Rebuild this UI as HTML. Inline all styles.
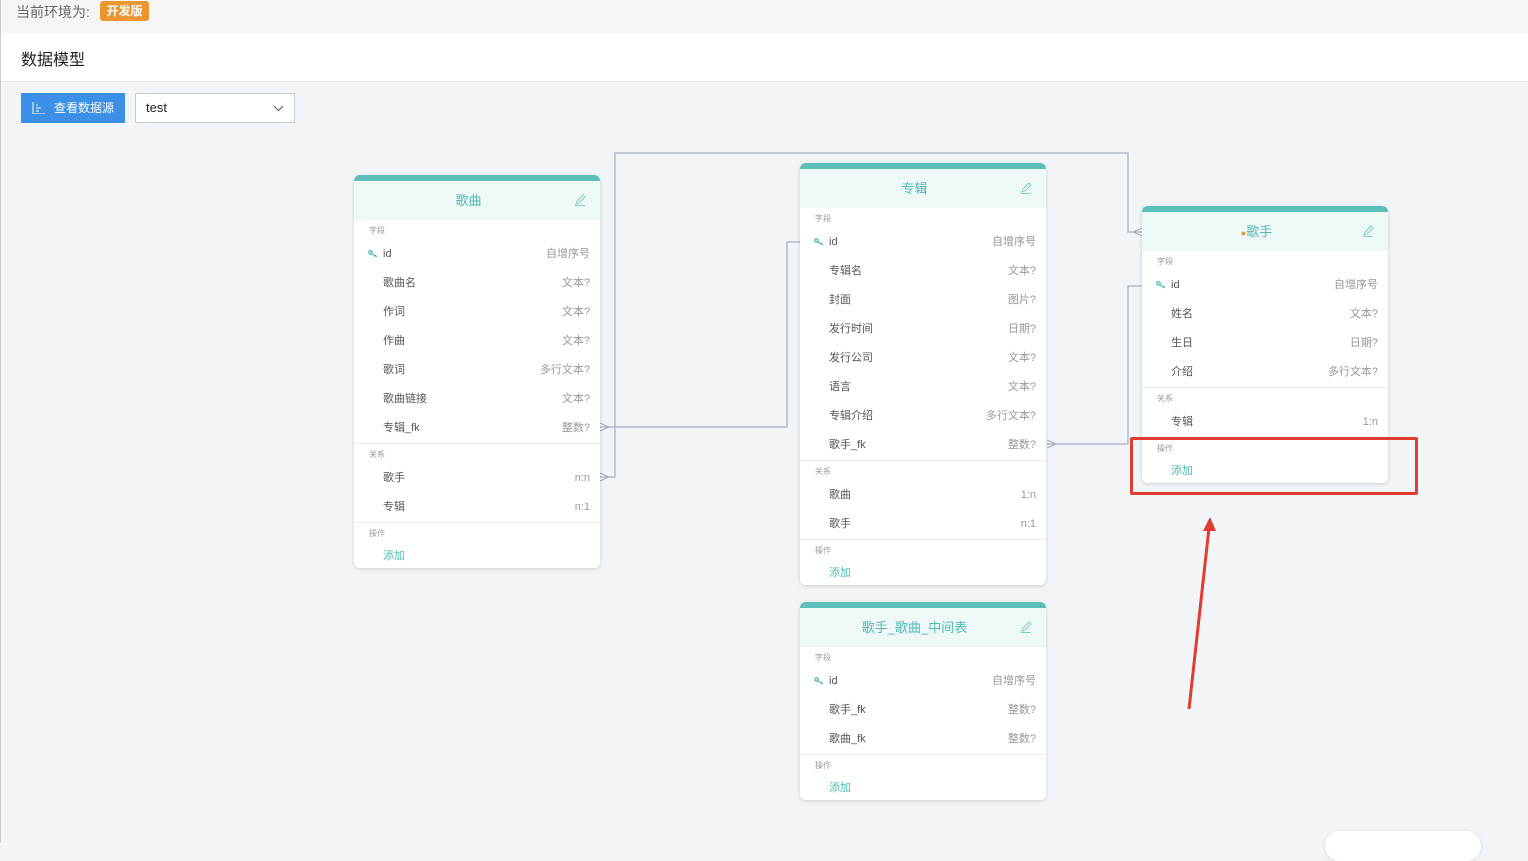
<!DOCTYPE html>
<html><head><meta charset="utf-8"><style>
*{box-sizing:border-box;margin:0;padding:0}
body{width:1528px;height:843px;overflow:hidden;background:#f2f5f8;font-family:"Liberation Sans","Noto Sans CJK SC",sans-serif;position:relative}
.lbd{position:absolute;left:0;top:0;width:1px;height:843px;background:#ccc}
.top{position:absolute;left:0;top:0;width:1528px;height:33px;background:#f5f5f5}
.top span.t{position:absolute;left:16px;top:2px;font-size:14px;color:#666}
.tag{position:absolute;left:100px;top:1px;width:49px;height:20px;background:#ec9632;border-radius:3px;color:#fff;font-size:12px;font-weight:bold;text-align:center;line-height:20px}
.hd{position:absolute;left:0;top:33px;width:1528px;height:49px;background:#fff;border-bottom:1px solid #e6eaee}
.hd span{position:absolute;left:21px;top:13px;font-size:16px;color:#222}
.btn{position:absolute;left:21px;top:93px;width:104px;height:30px;background:#3b8fe6;color:#fff;font-size:12px;line-height:30px;padding-left:33px}
.sel{position:absolute;left:135px;top:93px;width:160px;height:30px;background:#fff;border:1px solid #ccc;font-size:13px;line-height:28px;padding-left:10px;color:#222}
.card{position:absolute;width:246px;background:#fff;border-radius:6px;box-shadow:0 1px 4px rgba(0,0,0,.15);overflow:hidden;border-top:6px solid #5bbfb7}
.ch{height:39px;background:#eef8f7;color:#4fbab2;font-size:13px;text-align:center;line-height:39px;position:relative;padding-right:17px}
.ch svg{position:absolute;right:14px;top:13px}
.lb{height:20px;font-size:8px;color:#999;padding-left:15px;line-height:22px}
.r{height:29px;line-height:29px;font-size:11px;color:#555;padding:0 10px 0 29px;position:relative}
.r b{font-weight:normal;position:absolute;right:10px;color:#999}
.r i{position:absolute;left:14px;top:10px;display:block;width:10px;height:8px}
.r i svg{display:block}
.sec{border-top:1px solid #eee}
.add{color:#4fbab2;height:25px;line-height:27px}
</style></head><body>
<div class="top"><span class="t">当前环境为:</span><div class="tag">开发版</div></div>
<div class="hd"><span>数据模型</span></div>
<div class="lbd"></div>
<div class="btn"><svg style="position:absolute;left:11px;top:9px" width="13" height="12" viewBox="0 0 13 12" fill="none" stroke="#fff" stroke-width="1"><path d="M1 0v12h12M4 3h2M4 6h5M4 9h3"/></svg>查看数据源</div>
<div class="sel">test<svg style="position:absolute;right:10px;top:11px" width="11" height="7" viewBox="0 0 11 7" fill="none" stroke="#666" stroke-width="1.2"><path d="M1 1l4.5 4.5L10 1"/></svg></div>

<svg style="position:absolute;left:0;top:0" width="1528" height="843" fill="none" stroke="#a7afbf" stroke-width="1.2">
<path d="M600 427H787V242H800"/>
<path d="M600 477H615V153H1128V232H1142"/>
<path d="M1047 444H1128V286H1142"/>
<path d="M600 423l9 4-9 4M600 473l9 4-9 4M1047 440l9 4-9 4M1142 228l-9 4 9 4"/>
</svg>

<div class="card" style="left:354px;top:175px">
<div class="ch">歌曲<svg width="12" height="12" viewBox="0 0 12 12" fill="none" stroke="#7fcfc8"><path d="M2 10l1-3 6-6 2 2-6 6zM1 11.5h10"/></svg></div>
<div class="lb">字段</div>
<div class="r"><i><svg width="10" height="8" viewBox="0 0 10 8" fill="none" stroke="#4fbab2" stroke-width="1.3"><circle cx="2.5" cy="2.5" r="1.7"/><path d="M4 4l5 3M7 6l1-1"/></svg></i>id<b>自增序号</b></div>
<div class="r">歌曲名<b>文本?</b></div>
<div class="r">作词<b>文本?</b></div>
<div class="r">作曲<b>文本?</b></div>
<div class="r">歌词<b>多行文本?</b></div>
<div class="r">歌曲链接<b>文本?</b></div>
<div class="r">专辑_fk<b>整数?</b></div>
<div class="sec"><div class="lb">关系</div><div class="r">歌手<b>n:n</b></div><div class="r">专辑<b>n:1</b></div></div>
<div class="sec"><div class="lb">操作</div><div class="r add">添加</div></div>
</div>

<div class="card" style="left:800px;top:163px">
<div class="ch">专辑<svg width="12" height="12" viewBox="0 0 12 12" fill="none" stroke="#7fcfc8"><path d="M2 10l1-3 6-6 2 2-6 6zM1 11.5h10"/></svg></div>
<div class="lb">字段</div>
<div class="r"><i><svg width="10" height="8" viewBox="0 0 10 8" fill="none" stroke="#4fbab2" stroke-width="1.3"><circle cx="2.5" cy="2.5" r="1.7"/><path d="M4 4l5 3M7 6l1-1"/></svg></i>id<b>自增序号</b></div>
<div class="r">专辑名<b>文本?</b></div>
<div class="r">封面<b>图片?</b></div>
<div class="r">发行时间<b>日期?</b></div>
<div class="r">发行公司<b>文本?</b></div>
<div class="r">语言<b>文本?</b></div>
<div class="r">专辑介绍<b>多行文本?</b></div>
<div class="r">歌手_fk<b>整数?</b></div>
<div class="sec"><div class="lb">关系</div><div class="r">歌曲<b>1:n</b></div><div class="r">歌手<b>n:1</b></div></div>
<div class="sec"><div class="lb">操作</div><div class="r add">添加</div></div>
</div>

<div class="card" style="left:1142px;top:206px">
<div class="ch"><span style="color:#ec9632;font-size:9px">●</span>歌手<svg width="12" height="12" viewBox="0 0 12 12" fill="none" stroke="#7fcfc8"><path d="M2 10l1-3 6-6 2 2-6 6zM1 11.5h10"/></svg></div>
<div class="lb">字段</div>
<div class="r"><i><svg width="10" height="8" viewBox="0 0 10 8" fill="none" stroke="#4fbab2" stroke-width="1.3"><circle cx="2.5" cy="2.5" r="1.7"/><path d="M4 4l5 3M7 6l1-1"/></svg></i>id<b>自增序号</b></div>
<div class="r">姓名<b>文本?</b></div>
<div class="r">生日<b>日期?</b></div>
<div class="r">介绍<b>多行文本?</b></div>
<div class="sec"><div class="lb">关系</div><div class="r">专辑<b>1:n</b></div></div>
<div class="sec"><div class="lb">操作</div><div class="r add">添加</div></div>
</div>

<div class="card" style="left:800px;top:602px">
<div class="ch">歌手_歌曲_中间表<svg width="12" height="12" viewBox="0 0 12 12" fill="none" stroke="#7fcfc8"><path d="M2 10l1-3 6-6 2 2-6 6zM1 11.5h10"/></svg></div>
<div class="lb">字段</div>
<div class="r"><i><svg width="10" height="8" viewBox="0 0 10 8" fill="none" stroke="#4fbab2" stroke-width="1.3"><circle cx="2.5" cy="2.5" r="1.7"/><path d="M4 4l5 3M7 6l1-1"/></svg></i>id<b>自增序号</b></div>
<div class="r">歌手_fk<b>整数?</b></div>
<div class="r">歌曲_fk<b>整数?</b></div>
<div class="sec"><div class="lb">操作</div><div class="r add">添加</div></div>
</div>

<div style="position:absolute;left:1130px;top:437px;width:288px;height:58px;border:3px solid #e03c31;border-radius:2px"></div>
<svg style="position:absolute;left:0;top:0" width="1528" height="843">
<path d="M1189 709L1209 528" stroke="#e03c31" stroke-width="3" fill="none"/>
<path d="M1210 517l-7 14h13z" fill="#e03c31"/>
</svg>
<div style="position:absolute;left:1325px;top:831px;width:156px;height:30px;background:#fff;border-radius:15px;box-shadow:0 1px 4px rgba(0,0,0,.1)"></div>
</body></html>
